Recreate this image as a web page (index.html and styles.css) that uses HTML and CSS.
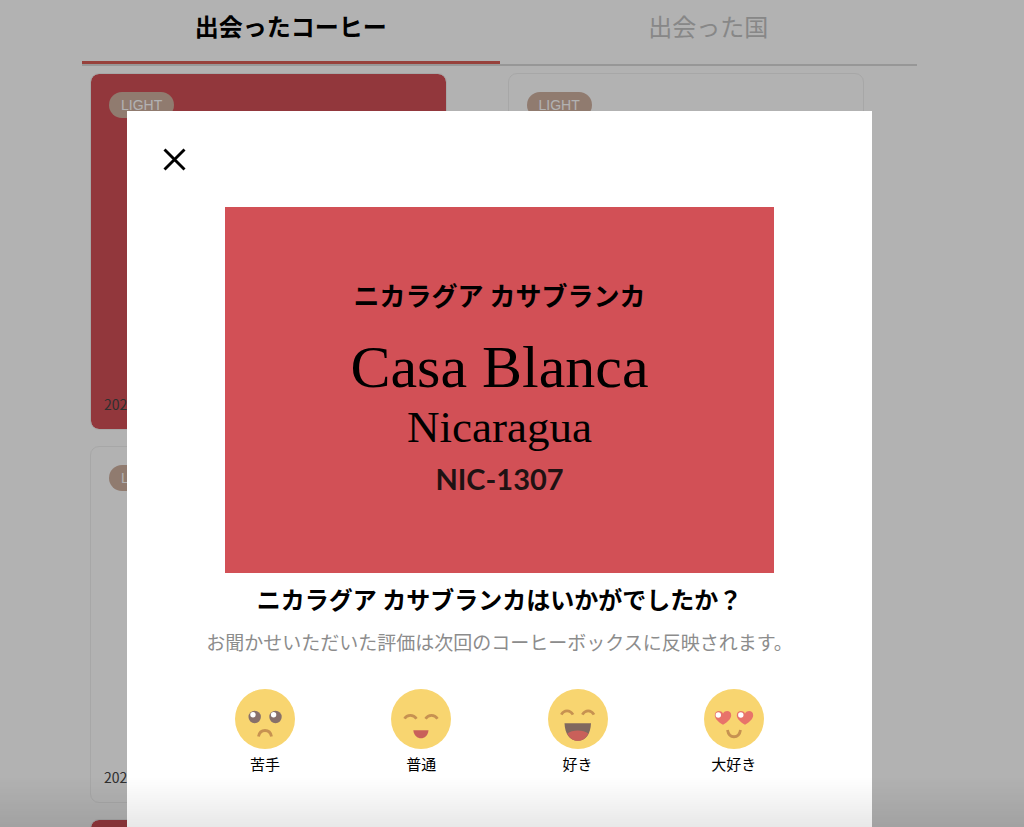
FILE: index.html
```html
<!DOCTYPE html>
<html lang="ja">
<head>
    <meta charset="UTF-8">
    <meta name="viewport" content="width=device-width, initial-scale=1.0">
    <title>出会ったコーヒー</title>
    <link rel="stylesheet" href="styles.css">
</head>
<body>
    <main class="container">
        <nav class="tabs">
            <button type="button" class="tab active">出会ったコーヒー</button>
            <button type="button" class="tab">出会った国</button>
        </nav>
        <div class="cards">
            <div class="card tasted">
                <span class="badge">LIGHT</span>
                <span class="date">2022.10</span>
            </div>
            <div class="card">
                <span class="badge">LIGHT</span>
            </div>
            <div class="card">
                <span class="badge">LIGHT</span>
                <span class="date">2022.10</span>
            </div>
            <div class="card"></div>
            <div class="card tasted"></div>
        </div>
    </main>

    <div class="overlay">
        <div class="modal" role="dialog" aria-modal="true" aria-labelledby="modal-title">
            <button type="button" class="close" aria-label="閉じる">
                <svg width="24" height="24" viewBox="0 0 24 24">
                    <path d="M1.5 2.5L21.5 22.5M21.5 2.5L1.5 22.5" fill="none" stroke="#000" stroke-width="2.9"/>
                </svg>
            </button>

            <div class="label">
                <p class="label-ja">ニカラグア カサブランカ</p>
                <p class="label-name">Casa Blanca</p>
                <p class="label-country">Nicaragua</p>
                <p class="label-code">NIC-1307</p>
            </div>

            <h2 id="modal-title">ニカラグア カサブランカはいかがでしたか？</h2>
            <p class="note">お聞かせいただいた評価は次回のコーヒーボックスに反映されます。</p>

            <div class="ratings">
                <button type="button" class="rating">
                    <svg viewBox="0 0 60 60">
                        <circle cx="30" cy="30" r="30" fill="#f8d570"/>
                        <circle cx="19.7" cy="28" r="6.2" fill="#87706a"/>
                        <circle cx="40.5" cy="28" r="6.2" fill="#87706a"/>
                        <circle cx="18" cy="25.8" r="2.7" fill="#fff"/>
                        <circle cx="38.6" cy="25.8" r="2.7" fill="#fff"/>
                        <path d="M23.5 47.5C25 39.5 35 39.5 36.5 47.5" fill="none" stroke="#c79251" stroke-width="2.8"/>
                    </svg>
                    苦手
                </button>
                <button type="button" class="rating">
                    <svg viewBox="0 0 60 60">
                        <circle cx="30" cy="30" r="30" fill="#f8d570"/>
                        <path d="M13.5 29.7C16 25.3 22.5 25.3 25.5 29.7M34.5 29.7C37.5 25.3 43.5 25.3 46.5 29.7" fill="none" stroke="#c79251" stroke-width="2.7"/>
                        <path d="M22.3 41.3H37.5C36.5 52 23.5 52 22.3 41.3Z" fill="#c9605a"/>
                    </svg>
                    普通
                </button>
                <button type="button" class="rating">
                    <svg viewBox="0 0 60 60">
                        <circle cx="30" cy="30" r="30" fill="#f8d570"/>
                        <path d="M13.3 25.7C16 20.5 22 20.5 25 25.7M34.3 25.7C37.3 20.5 43 20.5 46 25.7" fill="none" stroke="#c79251" stroke-width="2.7"/>
                        <path d="M16.5 34.3H43C42.5 45 38 51.8 29.8 51.8C21.5 51.8 17 45 16.5 34.3Z" fill="#80685f"/>
                        <path d="M19.3 44.5C24 40.4 35.5 40.4 40.3 44.5C38 49 35 51.8 29.8 51.8C24.8 51.8 21.5 49 19.3 44.5Z" fill="#c9605a"/>
                    </svg>
                    好き
                </button>
                <button type="button" class="rating">
                    <svg viewBox="0 0 60 60">
                        <circle cx="30" cy="30" r="30" fill="#f8d570"/>
                        <path id="heart" d="M19 35.8C14.5 33 10.8 29.8 10.8 26.2C10.8 21.6 16.8 20.6 19 24.4C21.5 20.6 27.2 21.6 27.2 26.2C27.2 29.8 23.5 33 19 35.8Z" fill="#e8736a"/>
                        <use href="#heart" x="22"/>
                        <circle cx="14.3" cy="26" r="2.7" fill="#fff"/>
                        <circle cx="36.8" cy="26" r="2.7" fill="#fff"/>
                        <path d="M23.5 41C25 50 35 50 36.5 41" fill="none" stroke="#c79251" stroke-width="2.8"/>
                    </svg>
                    大好き
                </button>
            </div>
        </div>
    </div>
    <div class="bottom-shade"></div>
</body>
</html>
```
FILE: styles.css
```css
* {
    margin: 0;
    padding: 0;
    box-sizing: border-box;
}
body {
    height: 100vh;
    overflow: hidden;
    padding-right: 25px;
    background: #fff;
    color: #000;
    font-family: "Noto Sans CJK JP", sans-serif;
}
button {
    border: none;
    background: none;
    color: inherit;
    font-family: inherit;
    cursor: pointer;
}
.container {
    max-width: 835px;
    margin: 0 auto;
}
.tabs {
    display: flex;
    border-bottom: 2px solid #d8d8d8;
}
.tab {
    flex: 1;
    height: 64px;
    padding-bottom: 10px;
    border-bottom: 3px solid transparent;
    color: #c2c2c2;
    font-size: 24px;
    line-height: 36px;
}
.tab.active {
    border-bottom-color: #d95e56;
    color: #000;
    font-weight: bold;
}
.cards {
    display: grid;
    grid-template-columns: 1fr 1fr;
    row-gap: 16px;
    padding-top: 7px;
}
.card {
    box-sizing: content-box;
    display: flex;
    flex-direction: column;
    justify-content: space-between;
    align-items: flex-start;
    width: 85%;
    aspect-ratio: 1;
    margin-left: 8px;
    border: 1px solid #f0f0f0;
    border-radius: 9px;
    background-clip: padding-box;
}
.card.tasted {
    background-color: #d25056;
}
.badge {
    margin: 18px;
    padding: 0 12px;
    border-radius: 13px;
    background: #cfb0a0;
    color: #fff;
    font-family: "Liberation Sans", sans-serif;
    font-size: 14px;
    line-height: 26px;
}
.date {
    margin: 14px 13px;
    color: #444;
    font-size: 14px;
    line-height: 22px;
}
.overlay {
    position: fixed;
    inset: 0;
    padding: 111px 25px 0 0;
    background: rgba(0, 0, 0, 0.3);
    overflow: hidden;
}
.modal {
    max-width: 745px;
    min-height: 100%;
    margin: 0 auto;
    padding: 32px 60px;
    background: #fff;
    text-align: center;
}
.close {
    display: flex;
    justify-content: center;
    align-items: center;
    width: 32px;
    height: 32px;
    margin-left: -28px;
}
.label {
    display: flex;
    flex-direction: column;
    justify-content: center;
    align-items: center;
    max-width: 549px;
    aspect-ratio: 3 / 2;
    margin: 32px auto 0;
    padding-bottom: 6px;
    background: #d25056;
}
.label-ja {
    margin-bottom: 18px;
    font-size: 26px;
    font-weight: bold;
    line-height: 36px;
}
.label-name {
    font-family: "Liberation Serif", serif;
    font-size: 60px;
    line-height: 72px;
}
.label-country {
    margin-bottom: 10px;
    font-family: "Liberation Serif", serif;
    font-size: 45px;
    line-height: 48px;
}
.label-code {
    color: #1f1213;
    font-family: Lato, sans-serif;
    font-size: 29px;
    font-weight: bold;
    line-height: 36px;
}
.modal h2 {
    margin-top: 8px;
    font-size: 24px;
    line-height: 36px;
}
.note {
    margin-top: 10px;
    color: #8c8c8c;
    font-size: 19px;
    line-height: 30px;
}
.ratings {
    display: grid;
    grid-template-columns: repeat(4, 1fr);
    margin-top: 32px;
}
.rating {
    display: flex;
    flex-direction: column;
    align-items: center;
    gap: 4px;
    font-size: 15px;
    line-height: 22px;
}
.rating svg {
    width: 60px;
    height: 60px;
}
.bottom-shade {
    position: fixed;
    inset: auto 0 0;
    height: 50px;
    background: linear-gradient(rgba(0, 0, 0, 0), rgba(0, 0, 0, 0.09));
    pointer-events: none;
}
```
